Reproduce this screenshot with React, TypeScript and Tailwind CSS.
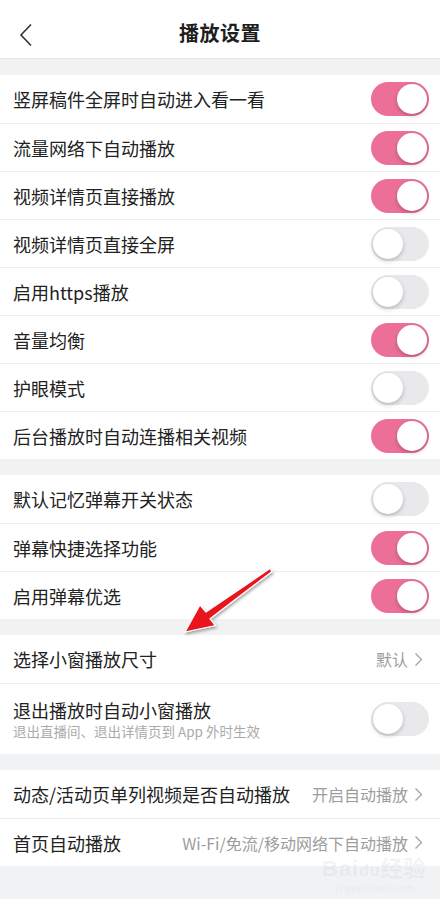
import type { ReactNode } from "react";

type Row = {
  label: string;
  on?: boolean;
  value?: string;
  sub?: string;
};

const groups: Row[][] = [
  [
    { label: "竖屏稿件全屏时自动进入看一看", on: true },
    { label: "流量网络下自动播放", on: true },
    { label: "视频详情页直接播放", on: true },
    { label: "视频详情页直接全屏", on: false },
    { label: "启用https播放", on: false },
    { label: "音量均衡", on: true },
    { label: "护眼模式", on: false },
    { label: "后台播放时自动连播相关视频", on: true },
  ],
  [
    { label: "默认记忆弹幕开关状态", on: false },
    { label: "弹幕快捷选择功能", on: true },
    { label: "启用弹幕优选", on: true },
  ],
  [
    { label: "选择小窗播放尺寸", value: "默认" },
    { label: "退出播放时自动小窗播放", on: false, sub: "退出直播间、退出详情页到 App 外时生效" },
  ],
  [
    { label: "动态/活动页单列视频是否自动播放", value: "开启自动播放" },
    { label: "首页自动播放", value: "Wi-Fi/免流/移动网络下自动播放" },
  ],
];

function Toggle({ on }: { on: boolean }) {
  return (
    <div
      className={`relative h-[34px] w-[58px] shrink-0 rounded-full ${
        on ? "bg-[#ec6f97]" : "bg-[#e9e9eb]"
      }`}
    >
      <div
        className={`absolute top-[2px] h-[30px] w-[30px] rounded-full bg-white shadow-[0_2px_4px_rgba(0,0,0,0.22)] ${
          on ? "left-[26px]" : "left-[2px]"
        }`}
      />
    </div>
  );
}

function Chevron() {
  return (
    <svg width="9" height="15" viewBox="0 0 9 15" className="ml-[6px] shrink-0">
      <path d="M1.5 1.5 L7.5 7.5 L1.5 13.5" fill="none" stroke="#a3a3a3" strokeWidth="1.3" />
    </svg>
  );
}

function Section({ children }: { children: ReactNode }) {
  return <div className="mt-4 bg-white">{children}</div>;
}

export default function App() {
  return (
    <div
      className="relative min-h-[899px] w-[440px] bg-[#f1f2f4] text-[#222]"
      style={{ fontFamily: '"Noto Sans CJK SC", "Noto Sans", sans-serif' }}
    >
      {/* header */}
      <div className="relative flex h-[59px] items-center justify-center border-b border-[#e8e8ea] bg-white pt-[7px]">
        <svg width="14" height="24" viewBox="0 0 14 24" className="absolute left-[19px] top-[23px]">
          <path d="M12 1.5 L2 12 L12 22.5" fill="none" stroke="#333" strokeWidth="1.6" />
        </svg>
        <span className="text-[20px] font-bold tracking-[0.5px] text-[#1e1e1e]">播放设置</span>
      </div>

      {groups.map((rows, gi) => (
        <Section key={gi}>
          {rows.map((r, i) => (
            <div
              key={r.label}
              className={`flex items-center justify-between pl-[13px] pr-[11px] ${
                r.sub ? "h-[71px]" : "h-[48px]"
              } ${i > 0 ? "border-t border-[#ececee]" : ""}`}
            >
              <div className="flex min-w-0 flex-col">
                <span className="whitespace-nowrap text-[18px] leading-[24px]">{r.label}</span>
                {r.sub && (
                  <span className="whitespace-nowrap text-[13.5px] leading-[18px] text-[#ababab]">
                    {r.sub}
                  </span>
                )}
              </div>
              {r.value !== undefined ? (
                <div className="flex items-center pr-[6px] text-[16px] text-[#9d9d9d]">
                  <span className="whitespace-nowrap">{r.value}</span>
                  <Chevron />
                </div>
              ) : (
                <Toggle on={!!r.on} />
              )}
            </div>
          ))}
        </Section>
      ))}

      {/* annotation arrow */}
      <svg
        width="440"
        height="899"
        viewBox="0 0 440 899"
        className="pointer-events-none absolute left-0 top-0"
      >
        <defs>
          <filter id="sh" x="-20%" y="-20%" width="140%" height="140%">
            <feDropShadow dx="1" dy="2" stdDeviation="1.5" floodColor="#000" floodOpacity="0.35" />
          </filter>
        </defs>
        <polygon
          points="270,568.6 206,612 200,605 185,632 215.5,625.5 210,618.8 272,571.4"
          fill="#e8151c"
          stroke="#fff"
          strokeWidth="1.2"
          strokeLinejoin="round"
          filter="url(#sh)"
        />
      </svg>

      {/* watermark */}
      <div className="pointer-events-none absolute left-[322px] top-[858px] flex flex-col items-center opacity-20">
        <span className="text-[22px] font-bold leading-[22px] tracking-[1px] text-[#c8c8c8]" style={{ fontFamily: '"Liberation Sans", "Noto Sans CJK SC", sans-serif' }}>
          Bai<span className="text-[16px]">du</span>经验
        </span>
        <span className="text-[9px] leading-[12px] text-[#c8c8c8]">jingyan.baidu.com</span>
      </div>
    </div>
  );
}
